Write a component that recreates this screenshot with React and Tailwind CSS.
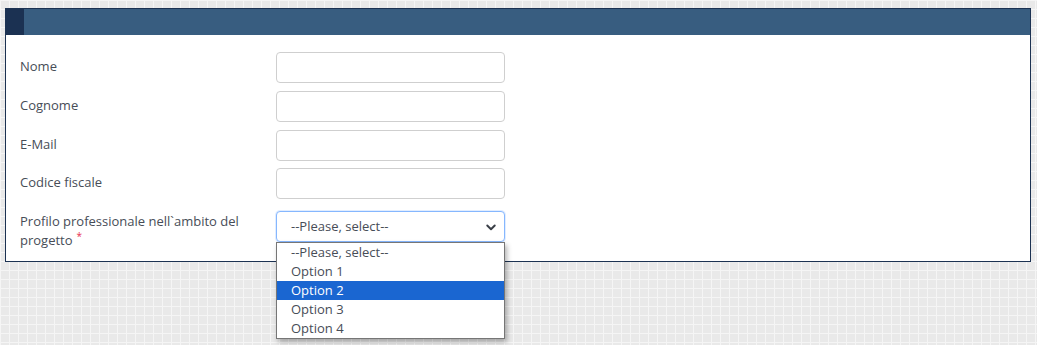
import React from "react";

function Row({ label, children, className = "" }) {
  return (
    <div className={"flex items-start " + className}>
      <div className="w-[256px] shrink-0 pr-4 text-[13px] leading-[19px] text-[#474d57]">{label}</div>
      <div className="w-[229px]">{children}</div>
    </div>
  );
}

function Input() {
  return <div className="h-[31px] w-[229px] rounded-[4px] border border-[#cfcfcf] bg-white" />;
}

export default function App() {
  return (
    <div className="min-h-[345px] w-[1037px] bg-[#e9e9e9] bg-[linear-gradient(to_right,#f5f5f5_1px,transparent_1px),linear-gradient(to_bottom,#f5f5f5_1px,transparent_1px)] bg-[size:9px_9px] pt-[8px] pl-[5px] font-['Open_Sans',sans-serif]">
      <div className="w-[1026px] border border-[#1c3252] bg-white">
        <div className="flex h-[26px] bg-[#385d80]">
          <div className="w-[18px] bg-[#1b3152]" />
        </div>
        <div className="relative pl-[14px] pt-[17px] pb-[11px]">
          <Row label={<div className="pt-[5px]">Nome</div>} className="mb-[8px]"><Input /></Row>
          <Row label={<div className="pt-[5px]">Cognome</div>} className="mb-[8px]"><Input /></Row>
          <Row label={<div className="pt-[5px]">E-Mail</div>} className="mb-[7px]"><Input /></Row>
          <Row label={<div className="pt-[5px]">Codice fiscale</div>} className="mb-[12px]"><Input /></Row>
          <Row
            label={
              <div className="pt-[1px]">
                Profilo professionale nell`ambito del progetto
                <span className="ml-[4px] inline-block align-top text-[10px] leading-[10px] text-[#e8304f]">*</span>
              </div>
            }
          >
            <div className="relative">
              <div className="flex h-[31px] w-[229px] items-center justify-between rounded-[4px] border border-[#86b7fe] bg-white pl-[14px] pr-[6px] text-[13px] text-[#474d57] shadow-[0_0_0_1px_rgba(134,183,254,0.25)]">
                <span>--Please, select--</span>
                <svg width="12" height="12" viewBox="0 0 16 16" className="mr-[1px]">
                  <path d="M3 6l5 5 5-5" fill="none" stroke="#3a3f47" strokeWidth="2.6" strokeLinecap="round" strokeLinejoin="round" />
                </svg>
              </div>
              <div className="absolute left-0 top-[31px] z-10 w-[229px] border border-[#767676] bg-white text-[13px] leading-[19px] text-[#474d57] shadow-[2px_3px_5px_rgba(0,0,0,0.3)]">
                <div className="pl-[14px]">--Please, select--</div>
                <div className="pl-[14px]">Option 1</div>
                <div className="bg-[#1a66d1] pl-[14px] text-white">Option 2</div>
                <div className="pl-[14px]">Option 3</div>
                <div className="pl-[14px]">Option 4</div>
              </div>
            </div>
          </Row>
        </div>
      </div>
    </div>
  );
}
